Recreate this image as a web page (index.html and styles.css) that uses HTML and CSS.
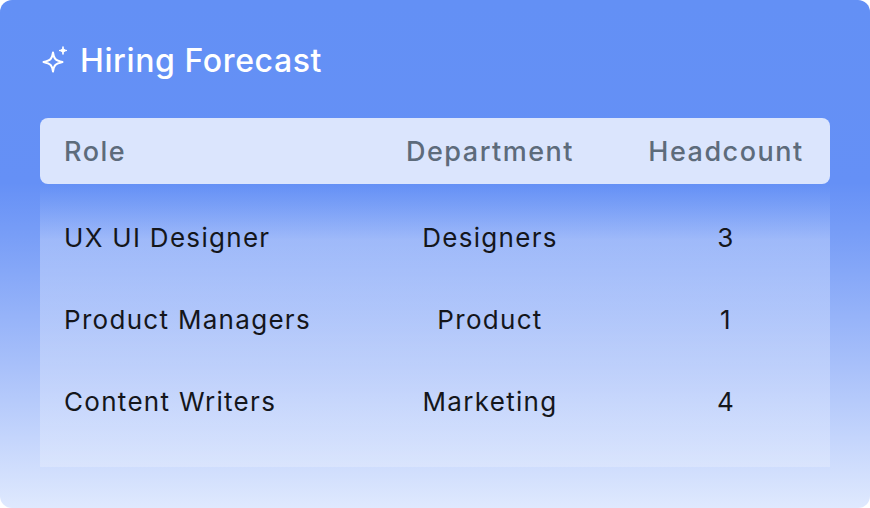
FILE: index.html
```html
<!DOCTYPE html>
<html>
<head>
<meta charset="utf-8">
<link rel="stylesheet" href="styles.css">
</head>
<body>
<div class="card">
  <div class="title">
    <svg class="spark" width="28" height="28" viewBox="0 0 28 28" fill="none" stroke="#fff" stroke-width="2" stroke-linejoin="round">
      <path d="M12 7.5 C12.9 13.8 14.2 15.2 21.5 17 C14.2 18.8 12.9 20.2 12 26.5 C11.1 20.2 9.8 18.8 2.5 17 C9.8 15.2 11.1 13.8 12 7.5 Z"/>
      <path d="M22 1.5 C22.4 4.3 23 5 26 5.5 C23 6 22.4 6.7 22 9.5 C21.6 6.7 21 6 18 5.5 C21 5 21.6 4.3 22 1.5 Z" fill="#fff" stroke-width="1"/>
    </svg>
    <span>Hiring Forecast</span>
  </div>
  <div class="table">
    <div class="row head">
      <div class="c1">Role</div>
      <div class="c2">Department</div>
      <div class="c3">Headcount</div>
    </div>
    <div class="body">
      <div class="row">
        <div class="c1">UX UI Designer</div>
        <div class="c2">Designers</div>
        <div class="c3">3</div>
      </div>
      <div class="row">
        <div class="c1">Product Managers</div>
        <div class="c2">Product</div>
        <div class="c3">1</div>
      </div>
      <div class="row">
        <div class="c1">Content Writers</div>
        <div class="c2">Marketing</div>
        <div class="c3">4</div>
      </div>
    </div>
  </div>
</div>
</body>
</html>
```

FILE: styles.css
```css
html, body {
  margin: 0;
  padding: 0;
  background: #ffffff;
}
body {
  font-family: "Inter", "Open Sans", sans-serif;
}
.card {
  width: 870px;
  height: 508px;
  box-sizing: border-box;
  border-radius: 12px;
  background: linear-gradient(180deg, #6390f5 0%, #6590f6 36%, #a8c0fa 72%, #dfe9fe 100%);
  padding: 42px 40px 0 41px;
  overflow: hidden;
}
.title {
  display: flex;
  align-items: center;
  height: 36px;
  gap: 11px;
  color: #fff;
  font-size: 32px;
  font-weight: 500;
  letter-spacing: 0.6px;
}
.spark {
  display: block;
  margin-top: -2px;
}
.table {
  margin-top: 40px;
  margin-left: -1px;
}
.row {
  display: grid;
  grid-template-columns: 1fr 312px 160px;
  padding: 0 24px;
  align-items: center;
  height: 82px;
  font-size: 26px;
  letter-spacing: 1.3px;
  color: #14161b;
}
.row .c2, .row .c3 {
  text-align: center;
}
.row.head {
  height: 66px;
  background: #dbe5fd;
  border-radius: 8px;
  color: #5d6b7b;
  font-size: 27px;
  font-weight: 500;
  letter-spacing: 1.5px;
}
.body {
  padding: 12px 0 25px;
  background: linear-gradient(180deg, rgba(99,144,245,0.55) 0px, rgba(255,255,255,0.28) 56px, rgba(255,255,255,0.22) 100%);
}
```
